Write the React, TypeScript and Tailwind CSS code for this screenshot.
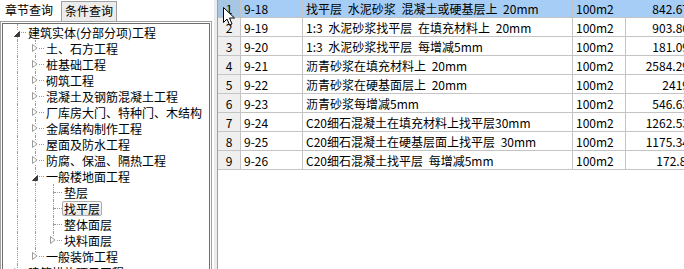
import React from "react";

type Node = { d: number; t: string; s?: "open" | "closed" | "leaf"; sel?: boolean };

const tree: Node[] = [
  { d: 0, t: "建筑实体(分部分项)工程", s: "open" },
  { d: 1, t: "土、石方工程", s: "closed" },
  { d: 1, t: "桩基础工程", s: "closed" },
  { d: 1, t: "砌筑工程", s: "closed" },
  { d: 1, t: "混凝土及钢筋混凝土工程", s: "closed" },
  { d: 1, t: "厂库房大门、特种门、木结构", s: "closed" },
  { d: 1, t: "金属结构制作工程", s: "closed" },
  { d: 1, t: "屋面及防水工程", s: "closed" },
  { d: 1, t: "防腐、保温、隔热工程", s: "closed" },
  { d: 1, t: "一般楼地面工程", s: "open" },
  { d: 2, t: "垫层", s: "leaf" },
  { d: 2, t: "找平层", s: "leaf", sel: true },
  { d: 2, t: "整体面层", s: "leaf" },
  { d: 2, t: "块料面层", s: "closed" },
  { d: 1, t: "一般装饰工程", s: "closed" },
  { d: 0, t: "建筑措施项目工程", s: "closed" },
];

// does the list at level k go on after row i?
const goesOn = (i: number, k: number) => {
  for (let j = i + 1; j < tree.length; j++) {
    if (tree[j].d < k) return false;
    if (tree[j].d === k) return true;
  }
  return false;
};

const rows = [
  ["9-18", "找平层 水泥砂浆 混凝土或硬基层上 20mm", "842.67"],
  ["9-19", "1:3 水泥砂浆找平层 在填充材料上 20mm", "903.86"],
  ["9-20", "1:3 水泥砂浆找平层 每增减5mm", "181.09"],
  ["9-21", "沥青砂浆在填充材料上 20mm", "2584.29"],
  ["9-22", "沥青砂浆在硬基面层上 20mm", "2419"],
  ["9-23", "沥青砂浆每增减5mm", "546.63"],
  ["9-24", "C20细石混凝土在填充材料上找平层30mm", "1262.53"],
  ["9-25", "C20细石混凝土在硬基层面上找平层 30mm", "1175.34"],
  ["9-26", "C20细石混凝土找平层 每增减5mm", "172.8\u00a0"],
];

const Toggle = ({ s }: { s?: Node["s"] }) => {
  if (s === "open")
    return (
      <svg width="6" height="6" className="relative z-10 mt-[3px] bg-white">
        <polygon points="5.5,0.5 5.5,5.5 0.5,5.5" fill="#3a3a3a" stroke="#3a3a3a" />
      </svg>
    );
  if (s === "closed")
    return (
      <svg width="6" height="8" className="relative z-10 bg-white">
        <polygon points="0.5,0.5 5,4 0.5,7.5" fill="#fff" stroke="#9a9a9a" />
      </svg>
    );
  return null;
};

const TreeRow = ({ n, i }: { n: Node; i: number }) => {
  const guides = [];
  for (let k = 0; k < n.d; k++) {
    guides.push(
      <div key={k} className="flex h-4 w-[18px] shrink-0 justify-center">
        {goesOn(i, k) && <div className="h-4 border-l border-dotted border-[#9a9a9a]" />}
      </div>
    );
  }
  return (
    <div className="flex h-4 items-center">
      {guides}
      <div className="relative flex h-4 w-[18px] shrink-0 items-center justify-center">
        <div className="absolute left-[9px] top-0 h-[8px] border-l border-dotted border-[#9a9a9a]" />
        {goesOn(i, n.d) && (
          <div className="absolute left-[9px] top-[8px] h-[8px] border-l border-dotted border-[#9a9a9a]" />
        )}
        <div className="absolute left-[10px] top-[8px] w-[8px] border-t border-dotted border-[#9a9a9a]" />
        <Toggle s={n.s} />
      </div>
      <div
        className={
          n.sel
            ? "h-[15px] rounded-[2px] border border-[#ababab] bg-[linear-gradient(#fafafa,#e6e6e6)] px-[1px] leading-[13px] whitespace-nowrap"
            : "h-[15px] border border-transparent px-[1px] leading-[13px] whitespace-nowrap"
        }
      >
        {n.t}
      </div>
    </div>
  );
};

export default function App() {
  return (
    <div className="relative flex h-[269px] w-[684px] overflow-hidden bg-white font-['Noto_Sans_CJK_SC',sans-serif] text-[12px] text-black">
      {/* left: chapter tree */}
      <div className="flex w-[212px] shrink-0 flex-col">
        <div className="flex h-[21px] items-end">
          <div className="h-[21px] w-[61px] pl-[5px] leading-[20px]">章节查询</div>
          <div className="h-[20px] border border-b-0 border-[#a0a0a0] bg-[#ececec] px-[3px] leading-[18px]">条件查询</div>
        </div>
        <div className="h-[270px] shrink-0 border border-[#a0a0a0] p-px">
          <div className="h-full overflow-hidden border border-[#6e6e6e] pl-[5px]">
            {tree.map((n, i) => (
              <TreeRow key={i} n={n} i={i} />
            ))}
          </div>
        </div>
      </div>

      {/* splitter */}
      <div className="flex w-[6px] shrink-0 border-r border-[#a0a0a0] pl-[2px]">
        <div className="w-[3px] bg-[#ececec]" />
      </div>

      {/* right: quota grid */}
      <div className="relative flex-1 overflow-hidden">
        <div className="-mt-[1px]">
          {rows.map(([code, desc, val], i) => {
            const sel = i === 0;
            return (
              <div key={code} className="flex h-[19px] w-max border-b border-[#c4c4c4] leading-[19px] whitespace-nowrap">
                <div className={`w-[23px] shrink-0 border-r border-[#c4c4c4] text-center ${sel ? "bg-[#a6c6e4]" : "bg-[#efefef]"}`}>
                  {i + 1}
                </div>
                <div className={`w-[62px] shrink-0 border-r border-[#c4c4c4] pl-[3px] ${sel ? "bg-[#a6cdf5]" : ""}`}>{code}</div>
                <div className={`w-[270px] shrink-0 border-r border-[#c4c4c4] pl-[3px] [word-spacing:3px] ${sel ? "bg-[#a6cdf5]" : ""}`}>{desc}</div>
                <div className={`w-[53px] shrink-0 border-r border-[#c4c4c4] pl-[3px] ${sel ? "bg-[#a6cdf5]" : ""}`}>100m2</div>
                <div className={`w-[66px] shrink-0 pr-[3px] text-right ${sel ? "bg-[#a6cdf5]" : ""}`}>{val}</div>
              </div>
            );
          })}
        </div>

        {/* mouse pointer */}
        <svg width="13" height="20" className="absolute left-[5px] top-[7px]">
          <path d="M0.5 0.5 L0.5 15.5 L4 12 L6.5 18 L9 17 L6.5 11 L11.5 11 Z" fill="#fff" stroke="#000" strokeLinejoin="round" />
        </svg>
      </div>
    </div>
  );
}
